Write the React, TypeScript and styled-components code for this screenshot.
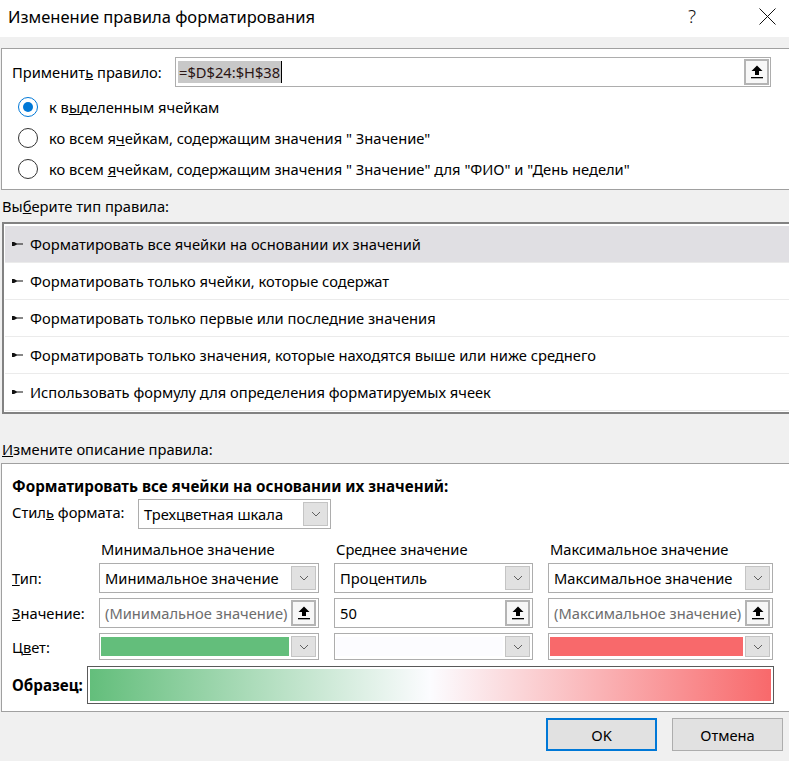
import React, { useState } from 'react';
import styled, { createGlobalStyle } from 'styled-components';

const GlobalStyle = createGlobalStyle`
  html, body {
    margin: 0;
    padding: 0;
    background: #f0f0f0;
  }
  body {
    font-family: "Noto Sans", "Open Sans", sans-serif;
    font-size: 14.7px;
    color: #000;
  }
`;

const Dialog = styled.div`
  width: 789px;
  height: 761px;
  overflow: hidden;
  background: #f0f0f0;
  display: flex;
  flex-direction: column;
`;

const TitleBar = styled.div`
  height: 37px;
  background: #fff;
  display: flex;
  align-items: center;
  padding-left: 8px;
  flex-shrink: 0;
`;

const Title = styled.div`
  flex: 1;
  font-size: 16.5px;
  line-height: 20px;
  margin-top: -4px;
`;

const HelpButton = styled.div`
  width: 30px;
  font-size: 19px;
  font-weight: 300;
  color: #111;
  margin-right: 50px;
  margin-top: -6px;
  text-align: center;
`;

const CloseButton = styled.div`
  width: 20px;
  height: 20px;
  margin-right: 12px;
  margin-top: -5px;
  display: flex;
  align-items: center;
  justify-content: center;
`;

const Panel = styled.div<{ $top: number; $height: number }>`
  margin: ${(p) => p.$top}px -20px 0 1px;
  height: ${(p) => p.$height}px;
  box-sizing: border-box;
  border: 1px solid #a0a0a0;
  background: #fff;
  flex-shrink: 0;
`;

const TopPanel = styled(Panel)`
  padding: 8px 0 0 10px;
  display: flex;
  flex-direction: column;
`;

const ApplyRow = styled.div`
  display: flex;
  align-items: center;
  height: 30px;
`;

const ApplyLabel = styled.div`
  width: 163px;
  line-height: 20px;
`;

const RangeInput = styled.div`
  width: 596px;
  height: 30px;
  box-sizing: border-box;
  border: 1px solid #adadad;
  display: flex;
  align-items: center;
  padding-left: 2px;
  background: #fff;
`;

const Selected = styled.span`
  background: #c8c8c8;
  color: #2a1515;
  line-height: 22px;
  padding: 0 1px;
  border-right: 1px solid #000;
`;

const InputText = styled.div<{ $muted?: boolean }>`
  flex: 1;
  padding-left: 4px;
  white-space: nowrap;
  overflow: hidden;
  color: ${(p) => (p.$muted ? '#6d6d6d' : '#000')};
  line-height: 20px;
`;

const PickButton = styled.div`
  width: 25px;
  height: 26px;
  box-sizing: border-box;
  border: 2px solid #b4b4b4;
  background: #f7f7f7;
  display: flex;
  align-items: center;
  justify-content: center;
  margin-right: 1px;
  flex-shrink: 0;
`;

const RadioRow = styled.label`
  display: flex;
  align-items: center;
  height: 31px;
  margin-left: 6px;
  gap: 11px;
  line-height: 20px;
  &:first-of-type {
    margin-top: 4px;
  }
`;

const RadioCircle = styled.span<{ $checked: boolean }>`
  width: 20px;
  height: 20px;
  box-sizing: border-box;
  border-radius: 50%;
  border: 1.5px solid ${(p) => (p.$checked ? '#0078d7' : '#333')};
  display: flex;
  align-items: center;
  justify-content: center;
  &::after {
    content: '';
    width: 10px;
    height: 10px;
    border-radius: 50%;
    background: ${(p) => (p.$checked ? '#0078d7' : 'transparent')};
  }
`;

const SectionLabel = styled.div<{ $height: number; $pad?: number }>`
  height: ${(p) => p.$height}px;
  box-sizing: border-box;
  padding-top: ${(p) => p.$pad ?? 0}px;
  display: flex;
  align-items: center;
  padding-left: 2px;
  line-height: 20px;
  flex-shrink: 0;
`;

const RuleList = styled.div`
  margin: 0 -20px 0 2px;
  height: 192px;
  box-sizing: border-box;
  border: 2px solid #828282;
  background: #fff;
  padding: 2px 0 0 1px;
  flex-shrink: 0;
`;

const RuleItem = styled.div<{ $active: boolean }>`
  height: 37px;
  box-sizing: border-box;
  border-bottom: 1px solid #ebebeb;
  background: ${(p) => (p.$active ? '#e0dfe3' : '#fff')};
  display: flex;
  align-items: center;
  padding-left: 7px;
  gap: 7px;
  line-height: 20px;
  cursor: default;
`;

const DescPanel = styled(Panel)`
  padding: 12px 0 0 10px;
  display: flex;
  flex-direction: column;
`;

const DescTitle = styled.div`
  font-weight: 700;
  font-size: 15.2px;
  line-height: 20px;
`;

const StyleRow = styled.div`
  display: flex;
  align-items: center;
  margin-top: 3px;
  height: 30px;
`;

const StyleLabel = styled.div`
  width: 126px;
  line-height: 20px;
  margin-top: -4px;
`;

const Grid = styled.div`
  display: grid;
  grid-template-columns: 72px 220px 199px 225px;
  column-gap: 15px;
  grid-template-rows: 29px 30px 30px 27px;
  row-gap: 5px;
  align-items: center;
`;

const ColHeader = styled.div`
  align-self: start;
  padding: 10px 0 0 2px;
  line-height: 20px;
  white-space: nowrap;
`;

const RowLabel = styled.div`
  line-height: 20px;
  white-space: nowrap;
`;

const Box = styled.div<{ $width?: number }>`
  height: 100%;
  width: ${(p) => (p.$width ? `${p.$width}px` : 'auto')};
  box-sizing: border-box;
  border: 1px solid #adadad;
  background: #fff;
  display: flex;
  align-items: center;
  padding: 0 1px 0 1px;
`;

const DropButton = styled.div`
  width: 25px;
  height: calc(100% - 4px);
  box-sizing: border-box;
  border: 1px solid #c4c4c4;
  background: #e1e1e1;
  display: flex;
  align-items: center;
  justify-content: center;
  margin-right: 1px;
  flex-shrink: 0;
`;

const Swatch = styled.div<{ $color: string }>`
  flex: 1;
  height: calc(100% - 6px);
  margin-right: 2px;
  background: ${(p) => p.$color};
`;

const SampleRow = styled.div`
  display: flex;
  align-items: center;
  margin-top: 6px;
  height: 38px;
`;

const SampleLabel = styled.div`
  width: 75px;
  font-weight: 700;
  font-size: 15.2px;
  line-height: 20px;
  white-space: nowrap;
`;

const SampleBar = styled.div`
  width: 687px;
  height: 38px;
  box-sizing: border-box;
  border: 1px solid #5a5a5a;
  padding: 2px;
  background: #fff;
`;

const Gradient = styled.div`
  height: 100%;
  background: linear-gradient(to right, #63be7b 0%, #fcfcff 50%, #f8696b 100%);
`;

const Footer = styled.div`
  display: flex;
  justify-content: flex-end;
  gap: 15px;
  padding: 6px 6px 0 0;
`;

const Button = styled.button<{ $primary?: boolean }>`
  width: 111px;
  height: 33px;
  box-sizing: border-box;
  background: #e1e1e1;
  border: ${(p) => (p.$primary ? '2px solid #0078d7' : '1px solid #adadad')};
  font-family: "Noto Sans", "Open Sans", sans-serif;
  font-size: 14.7px;
  color: #000;
  padding: 0;
`;

const UpArrow = () => (
  <svg width="12" height="14" viewBox="0 0 12 14">
    <polygon points="6,0.5 11.5,6 8,6 8,10 4,10 4,6 0.5,6" fill="#000" />
    <rect x="0" y="12" width="12" height="1.3" fill="#000" />
  </svg>
);

const Chevron = () => (
  <svg width="10" height="6" viewBox="0 0 10 6">
    <polyline points="1,1 5,5 9,1" fill="none" stroke="#606060" strokeWidth="1" />
  </svg>
);

const Tack = () => (
  <svg width="11" height="6" viewBox="0 0 11 6">
    <path d="M0 1 L2 1 L5 2.5 L11 2.5 L11 3.5 L5 3.5 L2 5 L0 5 Z" fill="#111" />
  </svg>
);

const rules = [
  'Форматировать все ячейки на основании их значений',
  'Форматировать только ячейки, которые содержат',
  'Форматировать только первые или последние значения',
  'Форматировать только значения, которые находятся выше или ниже среднего',
  'Использовать формулу для определения форматируемых ячеек',
];

const App = () => {
  const [scope, setScope] = useState(0);
  const [rule, setRule] = useState(0);

  const radios = [
    <>к в<u>ы</u>деленным ячейкам</>,
    <>ко всем я<u>ч</u>ейкам, содержащим значения " Значение"</>,
    <>ко всем <u>я</u>чейкам, содержащим значения " Значение" для "ФИО" и "День недели"</>,
  ];

  return (
    <Dialog>
      <GlobalStyle />
      <TitleBar>
        <Title>Изменение правила форматирования</Title>
        <HelpButton>?</HelpButton>
        <CloseButton>
          <svg width="17" height="17" viewBox="0 0 17 17">
            <path d="M0.5 0.5 L16.5 16.5 M16.5 0.5 L0.5 16.5" stroke="#111" strokeWidth="1" />
          </svg>
        </CloseButton>
      </TitleBar>

      <TopPanel $top={11} $height={142}>
        <ApplyRow>
          <ApplyLabel>Применит<u>ь</u> правило:</ApplyLabel>
          <RangeInput>
            <Selected>=$D$24:$H$38</Selected>
            <InputText />
            <PickButton><UpArrow /></PickButton>
          </RangeInput>
        </ApplyRow>
        {radios.map((text, i) => (
          <RadioRow key={i} onClick={() => setScope(i)}>
            <RadioCircle $checked={scope === i} />
            <span>{text}</span>
          </RadioRow>
        ))}
      </TopPanel>

      <SectionLabel $height={32}>Вы<u>б</u>ерите тип правила:</SectionLabel>
      <RuleList>
        {rules.map((r, i) => (
          <RuleItem key={i} $active={rule === i} onClick={() => setRule(i)}>
            <Tack />
            {r}
          </RuleItem>
        ))}
      </RuleList>

      <SectionLabel $height={49} $pad={20}>
        <u>И</u>змените описание правила:
      </SectionLabel>

      <DescPanel $top={0} $height={249}>
        <DescTitle>Форматировать все ячейки на основании их значений:</DescTitle>
        <StyleRow>
          <StyleLabel>Стил<u>ь</u> формата:</StyleLabel>
          <Box $width={193}>
            <InputText>Трехцветная шкала</InputText>
            <DropButton><Chevron /></DropButton>
          </Box>
        </StyleRow>
        <Grid>
          <div />
          <ColHeader>Минимальное значение</ColHeader>
          <ColHeader>Среднее значение</ColHeader>
          <ColHeader>Максимальное значение</ColHeader>

          <RowLabel><u>Т</u>ип:</RowLabel>
          <Box>
            <InputText>Минимальное значение</InputText>
            <DropButton><Chevron /></DropButton>
          </Box>
          <Box>
            <InputText>Процентиль</InputText>
            <DropButton><Chevron /></DropButton>
          </Box>
          <Box>
            <InputText>Максимальное значение</InputText>
            <DropButton><Chevron /></DropButton>
          </Box>

          <RowLabel><u>З</u>начение:</RowLabel>
          <Box>
            <InputText $muted>(Минимальное значение)</InputText>
            <PickButton><UpArrow /></PickButton>
          </Box>
          <Box>
            <InputText>50</InputText>
            <PickButton><UpArrow /></PickButton>
          </Box>
          <Box>
            <InputText $muted>(Максимальное значение)</InputText>
            <PickButton><UpArrow /></PickButton>
          </Box>

          <RowLabel>Ц<u>в</u>ет:</RowLabel>
          <Box>
            <Swatch $color="#63be7b" />
            <DropButton><Chevron /></DropButton>
          </Box>
          <Box>
            <Swatch $color="#fcfcff" />
            <DropButton><Chevron /></DropButton>
          </Box>
          <Box>
            <Swatch $color="#f8696b" />
            <DropButton><Chevron /></DropButton>
          </Box>
        </Grid>
        <SampleRow>
          <SampleLabel>Образец:</SampleLabel>
          <SampleBar><Gradient /></SampleBar>
        </SampleRow>
      </DescPanel>

      <Footer>
        <Button $primary>OK</Button>
        <Button>Отмена</Button>
      </Footer>
    </Dialog>
  );
};

export default App;
